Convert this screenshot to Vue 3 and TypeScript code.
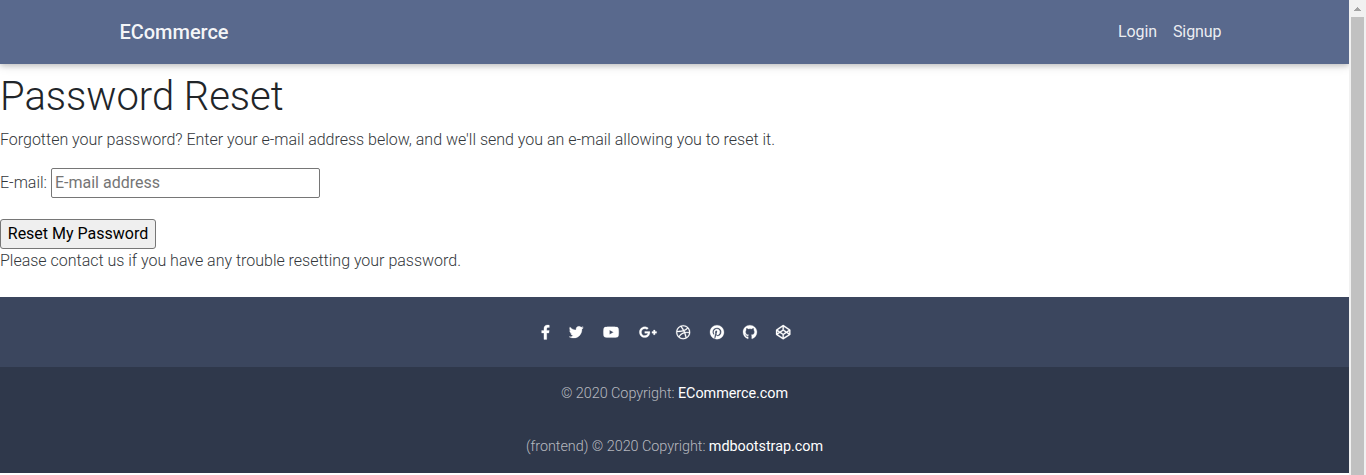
<script setup lang="ts">
interface Icon {
  name: string
  box: number
  d: string
}

const icons: Icon[] = [
  { name: 'Facebook', box: 320, d: 'M279.14 288l14.22-92.66h-88.91v-60.13c0-25.35 12.42-50.06 52.24-50.06h40.42V6.26S260.43 0 225.36 0c-73.22 0-121.08 44.38-121.08 124.72v70.62H22.89V288h81.39v224h100.17V288z' },
  { name: 'Twitter', box: 512, d: 'M459.37 151.716c.325 4.548.325 9.097.325 13.645 0 138.72-105.583 298.558-298.558 298.558-59.452 0-114.68-17.219-161.137-47.106 8.447.974 16.568 1.299 25.34 1.299 49.055 0 94.213-16.568 130.274-44.832-46.132-.975-84.792-31.188-98.112-72.772 6.498.974 12.995 1.624 19.818 1.624 9.421 0 18.843-1.3 27.614-3.573-48.081-9.747-84.143-51.98-84.143-102.985v-1.299c13.969 7.797 30.214 12.67 47.431 13.319-28.264-18.843-46.781-51.005-46.781-87.391 0-19.492 5.197-37.36 14.294-52.954 51.655 63.675 129.3 105.258 216.365 109.807-1.624-7.797-2.599-15.918-2.599-24.04 0-57.828 46.782-104.934 104.934-104.934 30.213 0 57.502 12.67 76.67 33.137 23.715-4.548 46.456-13.32 66.599-25.34-7.798 24.366-24.366 44.833-46.132 57.827 21.117-2.273 41.584-8.122 60.426-16.243-14.292 20.791-32.161 39.308-52.628 54.253z' },
  { name: 'YouTube', box: 576, d: 'M549.655 124.083c-6.281-23.65-24.787-42.276-48.284-48.597C458.781 64 288 64 288 64S117.22 64 74.629 75.486c-23.497 6.322-42.003 24.947-48.284 48.597-11.412 42.867-11.412 132.305-11.412 132.305s0 89.438 11.412 132.305c6.281 23.65 24.787 41.5 48.284 47.821C117.22 448 288 448 288 448s170.78 0 213.371-11.486c23.497-6.321 42.003-24.171 48.284-47.821 11.412-42.867 11.412-132.305 11.412-132.305s0-89.438-11.412-132.305zm-317.51 213.508V175.185l142.739 81.205-142.739 81.201z' },
  { name: 'Google Plus', box: 640, d: 'M386.061 228.496c1.834 9.692 3.143 19.384 3.143 31.956C389.204 370.205 315.599 448 204.8 448c-106.084 0-192-85.915-192-192s85.916-192 192-192c51.864 0 95.083 18.859 128.611 50.292l-52.126 50.03c-14.145-13.621-39.028-29.599-76.485-29.599-65.484 0-118.92 54.221-118.92 121.277 0 67.056 53.436 121.277 118.92 121.277 75.961 0 104.513-54.745 108.965-82.773H204.8v-66.009h181.261zm185.406 6.437V179.2h-56.001v55.733h-55.733v56.001h55.733v55.733h56.001v-55.733H627.2v-56.001h-55.733z' },
  { name: 'Dribbble', box: 512, d: 'M256 8C119.252 8 8 119.252 8 256s111.252 248 248 248 248-111.252 248-248S392.748 8 256 8zm163.97 114.366c29.503 36.046 47.369 81.957 47.835 131.955-6.984-1.477-77.018-15.682-147.502-6.818-5.752-14.041-11.181-26.393-18.617-41.614 78.321-31.977 113.818-77.482 118.284-83.523zM396.421 97.87c-3.81 5.427-35.697 48.286-111.021 76.519-34.712-63.776-73.185-116.168-79.04-124.008 67.176-16.193 137.966 1.27 190.061 47.489zm-230.48-33.25c5.585 7.659 43.438 60.116 78.537 122.509-99.087 26.313-186.36 25.934-195.834 25.809C62.38 147.205 106.678 92.573 165.941 64.62zM44.17 256.323c0-2.166.043-4.322.108-6.473 9.268.19 111.92 1.513 217.706-30.146 6.064 11.868 11.857 23.915 17.174 35.949-76.599 21.575-146.194 83.527-180.531 142.306C64.794 360.405 44.17 310.73 44.17 256.323zm81.807 167.113c22.127-45.233 82.178-103.622 167.579-132.756 29.74 77.283 42.039 142.053 45.189 160.638-68.112 29.013-150.015 21.053-212.768-27.882zm248.38 8.489c-2.171-12.886-13.446-74.897-41.152-151.033 66.38-10.626 124.7 6.768 131.947 9.055-9.442 58.941-43.273 109.844-90.795 141.978z' },
  { name: 'Pinterest', box: 496, d: 'M496 256c0 137-111 248-248 248-25.6 0-50.2-3.9-73.4-11.1 10.1-16.5 25.2-43.5 30.8-65 3-11.6 15.4-59 15.4-59 8.1 15.4 31.7 28.5 56.8 28.5 74.8 0 128.7-68.8 128.7-154.3 0-81.9-66.9-143.2-152.9-143.2-107 0-163.9 71.8-163.9 150.1 0 36.4 19.4 81.7 50.3 96.1 4.7 2.2 7.2 1.2 8.3-3.3.8-3.4 5-20.3 6.9-28.1.6-2.5.3-4.7-1.7-7.1-10.1-12.5-18.3-35.3-18.3-56.6 0-54.7 41.4-107.6 112-107.6 60.9 0 103.6 41.5 103.6 100.9 0 67.1-33.9 113.6-78 113.6-24.3 0-42.6-20.1-36.7-44.8 7-29.5 20.5-61.3 20.5-82.6 0-19-10.2-34.9-31.4-34.9-24.9 0-44.9 25.7-44.9 60.2 0 22 7.4 36.8 7.4 36.8s-24.5 103.8-29 123.2c-5 21.4-3 51.6-.9 71.2C65.4 450.9 0 361.1 0 256 0 119 111 8 248 8s248 111 248 248z' },
  { name: 'GitHub', box: 496, d: 'M244.8 8C106.1 8 0 113.3 0 252c0 110.9 69.8 205.8 169.5 239.2 12.8 2.3 17.3-5.6 17.3-12.1 0-6.2-.3-40.4-.3-61.4 0 0-70 15-84.7-29.8 0 0-11.4-29.1-27.8-36.6 0 0-22.9-15.7 1.6-15.4 0 0 24.9 2 38.6 25.8 21.9 38.6 58.6 27.5 72.9 20.9 2.3-16 8.8-27.1 16-33.7-55.9-6.2-112.3-14.3-112.3-110.5 0-27.5 7.6-41.3 23.6-58.9-2.6-6.5-11.1-33.3 2.6-67.9 20.9-6.5 69 27 69 27 20-5.6 41.5-8.5 62.8-8.5s42.8 2.9 62.8 8.5c0 0 48.1-33.6 69-27 13.7 34.7 5.2 61.4 2.6 67.9 16 17.7 25.8 31.5 25.8 58.9 0 96.5-58.9 104.2-114.8 110.5 9.2 7.9 17 22.9 17 46.4 0 33.7-.3 75.4-.3 83.6 0 6.5 4.6 14.4 17.3 12.1C428.2 457.8 496 362.9 496 252 496 113.3 383.5 8 244.8 8z' },
  { name: 'CodePen', box: 512, d: 'M502.285 159.704l-234-156c-7.987-4.915-16.511-4.96-24.571 0l-234 156C3.714 163.703 0 170.847 0 177.989v155.999c0 7.143 3.714 14.286 9.715 18.286l234 156.022c7.987 4.915 16.511 4.96 24.571 0l234-156.022c6-3.999 9.715-11.143 9.715-18.286V177.989c-.001-7.142-3.715-14.286-9.716-18.285zM278 63.131l172.286 114.858-76.857 51.429L278 165.703V63.131zm-44 0v102.572l-95.429 63.715-76.857-51.429L234 63.131zM44 219.132l55.143 36.857L44 292.847v-73.715zm190 229.715L61.714 333.989l76.857-51.429L234 346.275v102.572zm22-140.858l-77.715-52 77.715-52 77.715 52-77.715 52zm22 140.858V346.275l95.429-63.715 76.857 51.429L278 448.847zm190-156.001l-55.143-36.857L468 219.132v73.714z' },
]
</script>

<template>
  <div class="window">
    <div class="page">
      <nav class="navbar">
        <div class="container">
          <a class="brand">ECommerce</a>
          <div class="links">
            <a>Login</a>
            <a>Signup</a>
          </div>
        </div>
      </nav>

      <main class="content">
        <h1>Password Reset</h1>
        <p class="intro">Forgotten your password? Enter your e-mail address below, and we'll send you an e-mail allowing you to reset it.</p>
        <form @submit.prevent>
          <div class="field">
            <label for="email">E-mail:</label>
            <input id="email" type="email" placeholder="E-mail address" />
          </div>
          <button type="submit">Reset My Password</button>
        </form>
        <p class="help">Please contact us if you have any trouble resetting your password.</p>
      </main>

      <footer class="footer">
        <div class="social">
          <a v-for="icon in icons" :key="icon.name" :aria-label="icon.name">
            <svg :viewBox="`0 0 ${icon.box} 512`" :width="(icon.box / 512) * 14.4" height="14.4">
              <path :d="icon.d" />
            </svg>
          </a>
        </div>
        <div class="copyright">© 2020 Copyright: <a>ECommerce.com</a></div>
        <div class="copyright">(frontend) © 2020 Copyright: <a>mdbootstrap.com</a></div>
      </footer>
    </div>

    <div class="scrollbar">
      <div class="arrow"><svg width="7" height="4" viewBox="0 0 7 4" shape-rendering="crispEdges"><path d="M3 0h1v1h1v1h1v1h1v1H0V3h1V2h1V1h1z" /></svg></div>
      <div class="thumb"></div>
    </div>
  </div>
</template>

<style>
body {
  margin: 0;
  overflow: hidden;
}
</style>

<style scoped>
.window {
  display: flex;
  height: 475px;
  overflow: hidden;
  background: #fff;
  color: #212529;
  font: 300 16px/24px Roboto, sans-serif;
}
.window * {
  box-sizing: border-box;
}
.page {
  width: 1349px;
  flex: none;
}
.navbar {
  height: 64px;
  background: #59698d;
  box-shadow: 0 2px 5px 0 rgba(0, 0, 0, 0.16), 0 2px 10px 0 rgba(0, 0, 0, 0.12);
}
.container {
  display: flex;
  justify-content: space-between;
  align-items: center;
  width: 1140px;
  height: 64px;
  margin: 0 auto;
  padding: 0 23px 0 15px;
  color: #fff;
}
.brand {
  font-size: 20px;
  font-weight: 500;
  letter-spacing: -0.03px;
  color: rgba(255, 255, 255, 0.95);
}
.links {
  display: flex;
  gap: 16px;
  font-weight: 400;
  letter-spacing: -0.08px;
  color: rgba(255, 255, 255, 0.9);
}
.content {
  height: 233px;
  padding-top: 9px;
}
h1 {
  margin: 0 0 7px;
  font-size: 40px;
  font-weight: 300;
  line-height: 48px;
  letter-spacing: -0.03px;
}
p,
label {
  margin: 0;
  color: #33373b;
  letter-spacing: -0.01px;
}
.field {
  display: flex;
  align-items: center;
  gap: 4px;
  margin: 16px 0 21px;
}
input {
  width: 269px;
  height: 30px;
  padding: 0 3px 2px;
  border: 1px solid #767676;
  border-radius: 2px;
  font: 400 16px/24px Roboto, sans-serif;
  background: #fff;
}
input::placeholder {
  color: #757575;
  opacity: 1;
}
button {
  display: block;
  width: 156px;
  height: 30px;
  padding: 0;
  border: 1px solid #767676;
  border-radius: 3px;
  background: #efefef;
  color: #000;
  font: 400 16px/24px Roboto, sans-serif;
  white-space: nowrap;
}
.footer {
  background: #3b465e;
  color: #fff;
  font-size: 14.4px;
  line-height: 21.6px;
}
.social {
  display: flex;
  justify-content: center;
  align-items: center;
  gap: 19.4px;
  height: 70px;
  padding-right: 17.4px;
}
.social a {
  display: flex;
}
.social svg {
  overflow: visible;
  fill: #fff;
  stroke: #fff;
  stroke-width: 9;
}
.copyright {
  height: 53px;
  padding: 16px 0;
  background: #2f384b;
  color: rgba(255, 255, 255, 0.66);
  text-align: center;
  font-weight: 300;
  letter-spacing: -0.04px;
}
.copyright a {
  color: #fff;
  font-weight: 400;
}
.scrollbar {
  width: 17px;
  height: 475px;
  flex: none;
  background: #f1f1f1;
}
.arrow {
  display: flex;
  justify-content: center;
  height: 17px;
  padding-top: 7px;
}
.arrow svg {
  fill: #a3a3a3;
}
.thumb {
  width: 13px;
  height: 458px;
  margin: 0 auto;
  background: #c1c1c1;
}
</style>
